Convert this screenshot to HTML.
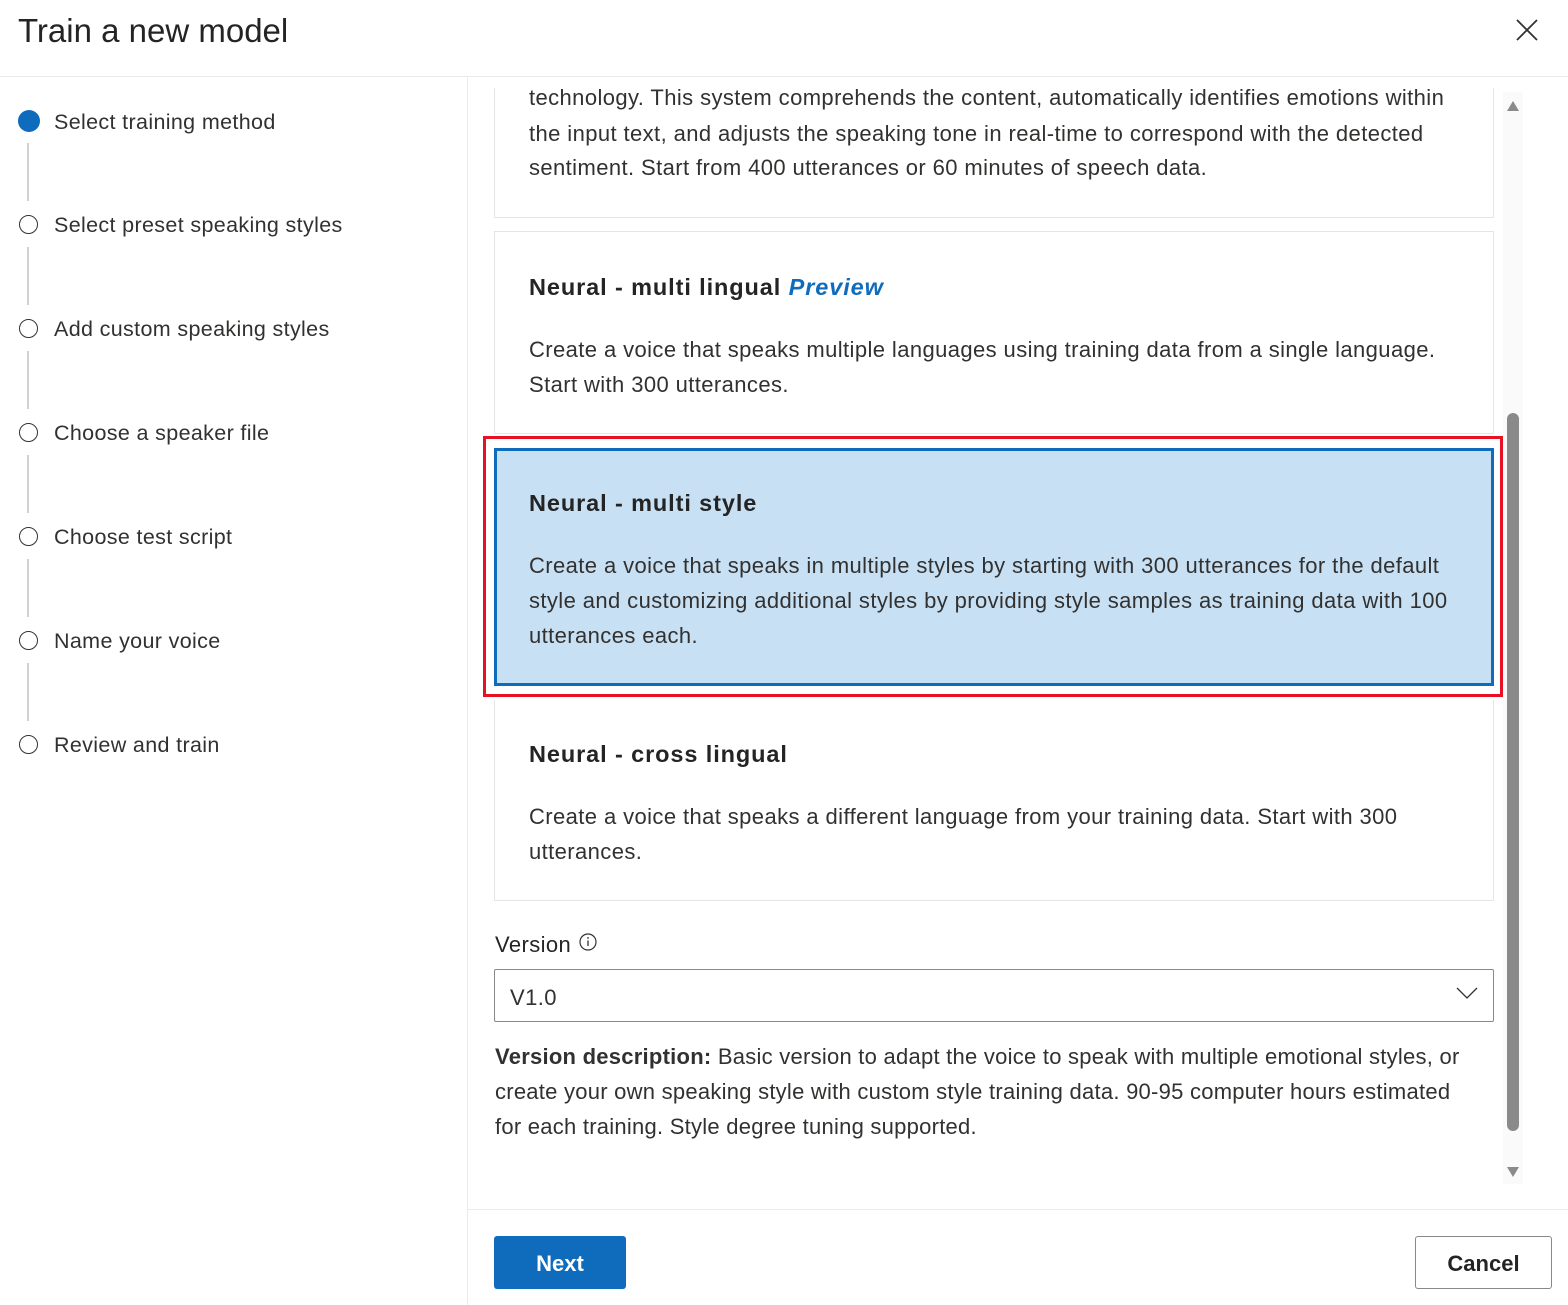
<!DOCTYPE html>
<html><head><style>
*{margin:0;padding:0;box-sizing:border-box}
body{width:1568px;height:1305px;position:relative;overflow:hidden;background:#fff;font-family:"Liberation Sans",sans-serif;color:#323130}
.a{position:absolute;white-space:nowrap}
.t{font-size:22px;line-height:24px;letter-spacing:0.4px}
.h{font-size:23.5px;line-height:28px;font-weight:bold;color:#242424;letter-spacing:0.9px}
.st{position:absolute;left:54px;font-size:21.5px;line-height:24px;color:#323130;white-space:nowrap;letter-spacing:0.35px}
.c{position:absolute;left:19px;width:19px;height:19px;border:1.5px solid #323130;border-radius:50%}
.ln{position:absolute;left:27px;width:2px;background:#d1d1d1}
.card{position:absolute;left:494px;width:1000px;border:1px solid #e5e5e5;background:#fff}
</style></head><body>
<div class="a" style="left:18px;top:12px;font-size:33px;line-height:38px;color:#242424">Train a new model</div>
<svg class="a" style="left:1515px;top:18px" width="24" height="24"><path d="M2 2L22 22M22 2L2 22" stroke="#323130" stroke-width="1.8"/></svg>
<div class="a" style="left:0;top:76px;width:1568px;height:1px;background:#ebebeb"></div>
<div class="a" style="left:467px;top:77px;width:1px;height:1228px;background:#ebebeb"></div>

<div class="a" style="left:18px;top:110px;width:22px;height:22px;border-radius:50%;background:#0f6cbd"></div>
<div class="st" style="top:110px">Select training method</div>
<div class="ln" style="top:143px;height:58px"></div>
<div class="c" style="top:215px"></div><div class="st" style="top:213px">Select preset speaking styles</div>
<div class="ln" style="top:247px;height:58px"></div>
<div class="c" style="top:319px"></div><div class="st" style="top:317px">Add custom speaking styles</div>
<div class="ln" style="top:351px;height:58px"></div>
<div class="c" style="top:423px"></div><div class="st" style="top:421px">Choose a speaker file</div>
<div class="ln" style="top:455px;height:58px"></div>
<div class="c" style="top:527px"></div><div class="st" style="top:525px">Choose test script</div>
<div class="ln" style="top:559px;height:58px"></div>
<div class="c" style="top:631px"></div><div class="st" style="top:629px">Name your voice</div>
<div class="ln" style="top:663px;height:58px"></div>
<div class="c" style="top:735px"></div><div class="st" style="top:733px">Review and train</div>

<div class="a" style="left:470px;top:88px;width:1030px;height:1100px;overflow:hidden">
 <div class="card" style="left:24px;top:-60px;height:190px;border-top:none"></div>
 <div class="a t" style="left:59px;top:-2px">technology. This system comprehends the content, automatically identifies emotions within</div>
</div>
<div class="a t" style="left:529px;top:122px">the input text, and adjusts the speaking tone in real-time to correspond with the detected</div>
<div class="a t" style="left:529px;top:156px">sentiment. Start from 400 utterances or 60 minutes of speech data.</div>

<div class="card" style="top:231px;height:203px"></div>
<div class="a h" style="left:529px;top:273px">Neural - multi lingual <i style="color:#0f6cbd">Preview</i></div>
<div class="a t" style="left:529px;top:338px">Create a voice that speaks multiple languages using training data from a single language.</div>
<div class="a t" style="left:529px;top:373px">Start with 300 utterances.</div>

<div class="a" style="left:483px;top:436px;width:1020px;height:261px;border:3px solid #e81123"></div>
<div class="a" style="left:494px;top:448px;width:1000px;height:238px;border:3px solid #0f6cbd;background:#c7e0f4"></div>
<div class="a h" style="left:529px;top:489px">Neural - multi style</div>
<div class="a t" style="left:529px;top:554px">Create a voice that speaks in multiple styles by starting with 300 utterances for the default</div>
<div class="a t" style="left:529px;top:589px">style and customizing additional styles by providing style samples as training data with 100</div>
<div class="a t" style="left:529px;top:624px">utterances each.</div>

<div class="card" style="top:700px;height:201px;border-top:none"></div>
<div class="a h" style="left:529px;top:740px">Neural - cross lingual</div>
<div class="a t" style="left:529px;top:805px">Create a voice that speaks a different language from your training data. Start with 300</div>
<div class="a t" style="left:529px;top:840px">utterances.</div>

<div class="a t" style="left:495px;top:933px;color:#242424">Version</div>
<svg class="a" style="left:578px;top:932px" width="20" height="20"><circle cx="10" cy="10" r="8" fill="none" stroke="#323130" stroke-width="1.2"/><path d="M10 8.5V14" stroke="#323130" stroke-width="1.3"/><circle cx="10" cy="6" r="0.9" fill="#323130"/></svg>
<div class="a" style="left:494px;top:969px;width:1000px;height:53px;border:1px solid #8a8886;border-radius:2px"></div>
<div class="a t" style="left:510px;top:986px">V1.0</div>
<svg class="a" style="left:1456px;top:986px" width="22" height="14"><path d="M1 2L11 12L21 2" fill="none" stroke="#323130" stroke-width="1.3"/></svg>
<div class="a t" style="left:495px;top:1045px;letter-spacing:0.25px"><b>Version description:</b> Basic version to adapt the voice to speak with multiple emotional styles, or</div>
<div class="a t" style="left:495px;top:1080px;letter-spacing:0.25px">create your own speaking style with custom style training data. 90-95 computer hours estimated</div>
<div class="a t" style="left:495px;top:1115px;letter-spacing:0.25px">for each training. Style degree tuning supported.</div>

<div class="a" style="left:1503px;top:92px;width:20px;height:1092px;background:#fafafa"></div>
<svg class="a" style="left:1506px;top:100px" width="14" height="12"><path d="M7 1L13 11H1Z" fill="#8a8a8a"/></svg>
<svg class="a" style="left:1506px;top:1166px" width="14" height="12"><path d="M7 11L13 1H1Z" fill="#8a8a8a"/></svg>
<div class="a" style="left:1507px;top:413px;width:12px;height:718px;border-radius:6px;background:#8a8a8a"></div>

<div class="a" style="left:468px;top:1209px;width:1100px;height:1px;background:#ebebeb"></div>
<div class="a" style="left:494px;top:1236px;width:132px;height:53px;background:#0f6cbd;border-radius:3px;color:#fff;font-size:22px;font-weight:bold;line-height:55px;text-align:center">Next</div>
<div class="a" style="left:1415px;top:1236px;width:137px;height:53px;border:1px solid #8a8886;border-radius:3px;font-size:22px;font-weight:bold;line-height:53px;text-align:center;color:#242424">Cancel</div>
</body></html>
